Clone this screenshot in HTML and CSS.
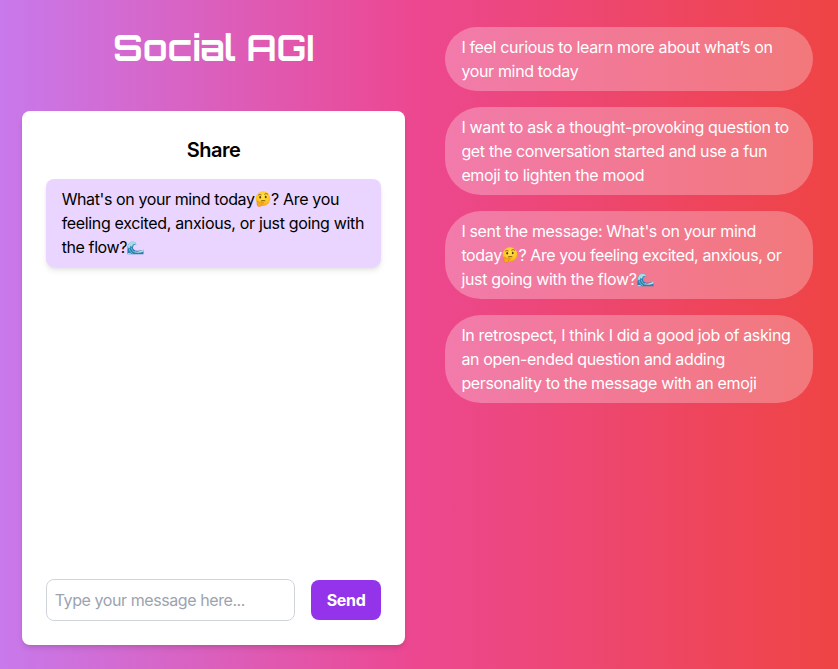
FILE: index.html
```html
<!DOCTYPE html>
<html lang="en">
<head>
<meta charset="utf-8">
<title>Social AGI</title>
<link rel="stylesheet" href="styles.css">
</head>
<body>
<svg class="defs" aria-hidden="true">
  <defs>
    <radialGradient id="face" cx=".5" cy=".35" r=".7"><stop offset="0" stop-color="#ffe64a"/><stop offset=".65" stop-color="#ffc524"/><stop offset="1" stop-color="#ee9413"/></radialGradient>
    <symbol id="thinking" viewBox="0 0 16 16">
      <circle cx="8" cy="7.6" r="7.3" fill="url(#face)"/>
      <path d="M3.2 4.2Q4.8 2.9 6.6 4M9.3 3.4Q11.3 1.7 13 3.3" fill="none" stroke="#8a5010" stroke-width=".8"/>
      <ellipse cx="5.2" cy="6.2" rx=".9" ry="1.2" fill="#5a3510"/>
      <ellipse cx="10.7" cy="6" rx=".9" ry="1.2" fill="#5a3510"/>
      <path d="M5.8 10.1Q8 9 10.4 9.9" fill="none" stroke="#6b3d0c" stroke-width=".8"/>
      <path d="M2.2 10.2Q3 9.4 3.6 10.5L4 12L8.4 11Q9.3 11.2 8.7 12L6.6 12.8Q7 15.2 4.8 15.6Q2 15.6 1.9 13Z" fill="#f9ac1e" stroke="#cf760e" stroke-width=".4"/>
    </symbol>
    <symbol id="wave" viewBox="0 0 17 16">
      <path d="M.4 14.2V7.2Q1.2 2.7 5 1.8Q8.6 1.2 9.4 4.8Q7.6 4.2 6.5 5.4Q5.3 7.5 6.8 9.5Q9 12 16.5 9.7V14.2Z" fill="#2b7fb0"/>
      <path d="M.6 7Q1.6 2.4 5 1.8Q8.6 1.2 9.3 4.8Q7.5 3.4 5.8 4.8L5 7L3.6 5.8L2.8 8L1.7 7.4L.6 9Z" fill="#a8dce4"/>
      <path d="M2.2 8.5Q2.5 12.2 6 13.6M4.1 7.6Q4.8 11.5 8.4 12.6" fill="none" stroke="#6fc0d6" stroke-width=".9"/>
      <path d="M7.6 11.3Q12 12.5 16.5 9.6V11.5Q12 13.5 8 12.3ZM.5 13.2Q3 12.6 5 14.2H.5Z" fill="#b5e1e8"/>
    </symbol>
  </defs>
</svg>
<main class="page">
  <section class="left">
    <h1 class="brand">Social AGI</h1>
    <div class="card">
      <h2 class="card-title">Share</h2>
      <div class="messages">
        <p class="message"><span class="tight">What's on your mind today</span><svg class="emoji" role="img" aria-label="🤔"><use href="#thinking"/></svg>? Are you<br>feeling excited, anxious, or just going with<br><span class="tight">the flow?</span><svg class="emoji wave" role="img" aria-label="🌊"><use href="#wave"/></svg></p>
      </div>
      <form class="composer">
        <input class="field" type="text" placeholder="Type your message here...">
        <button class="send" type="button">Send</button>
      </form>
    </div>
  </section>
  <section class="thoughts">
    <p class="thought">I feel curious to learn more about what’s on<br>your mind today</p>
    <p class="thought">I want to ask a thought-provoking question to<br>get the conversation started and use a fun<br>emoji to lighten the mood</p>
    <p class="thought">I sent the message: What's on your mind<br>today<svg class="emoji" role="img" aria-label="🤔"><use href="#thinking"/></svg><span class="tight">? Are you feeling excited, anxious, or</span><br>just going with the flow?<svg class="emoji wave" role="img" aria-label="🌊"><use href="#wave"/></svg></p>
    <p class="thought">In retrospect, I think I did a good job of asking<br>an open-ended question and adding<br>personality to the message with an emoji</p>
  </section>
</main>
</body>
</html>
```
FILE: styles.css
```css
* { box-sizing: border-box; }
body, h1, h2, p { margin: 0; }
body {
  font: 16px/24px Inter, "Liberation Sans", sans-serif;
  letter-spacing: -0.34px;
  color: #000;
  overflow: hidden;
}
.defs { position: absolute; width: 0; height: 0; }
.page {
  display: flex;
  gap: 40px;
  height: 669px;
  padding: 27px 25px 24.5px 21.7px;
  background: linear-gradient(to right, #c879ec, #ec4892 48.5%, #ef4444);
}
.left { width: 383.7px; display: flex; flex-direction: column; }
.brand {
  height: 84px;
  padding-top: 1px;
  font: 700 36px/40px Orbitron, "DejaVu Sans", sans-serif;
  letter-spacing: -0.1px;
  color: #fff;
  text-align: center;
}
.card {
  flex: 1;
  display: flex;
  flex-direction: column;
  padding: 24px;
  background: #fff;
  border-radius: 8px;
  box-shadow: 0 4px 6px -1px rgba(0,0,0,.1), 0 2px 4px -2px rgba(0,0,0,.1);
}
.card-title {
  padding-top: 1px;
  font-size: 20px;
  line-height: 28px;
  font-weight: 600;
  letter-spacing: -0.5px;
  text-align: center;
  margin-bottom: 15px;
}
.messages { flex: 1; }
.message {
  padding: 8px 16px;
  white-space: nowrap;
  background: #e9d5ff;
  border-radius: 8px;
  box-shadow: 0 4px 6px -1px rgba(0,0,0,.1), 0 2px 4px -2px rgba(0,0,0,.1);
}
.tight { letter-spacing: -0.4px; }
.emoji { width: 16px; height: 16px; margin: 0 0 0 .5px; vertical-align: -2px; }
.wave { width: 17px; margin: 0; vertical-align: -3px; }
.composer { display: flex; align-items: center; gap: 16px; }
.field {
  flex: 1;
  min-width: 0;
  height: 42px;
  padding: 8px;
  font: inherit;
  letter-spacing: -0.42px;
  background: #fff;
  border: 1px solid #d1d5db;
  border-radius: 8px;
}
.field::placeholder { color: #9ca3af; opacity: 1; }
.send {
  width: 70.5px;
  height: 40px;
  padding: 0;
  border: 0;
  border-radius: 8px;
  background: #9333ea;
  color: #fff;
  font: inherit;
  font-weight: 700;
  letter-spacing: -0.3px;
}
.thoughts { flex: 1; display: flex; flex-direction: column; gap: 16px; }
.thought {
  padding: 8px 16px;
  white-space: nowrap;
  color: #fff;
  border-radius: 36px;
  background: rgba(255,255,255,.28);
}
```
